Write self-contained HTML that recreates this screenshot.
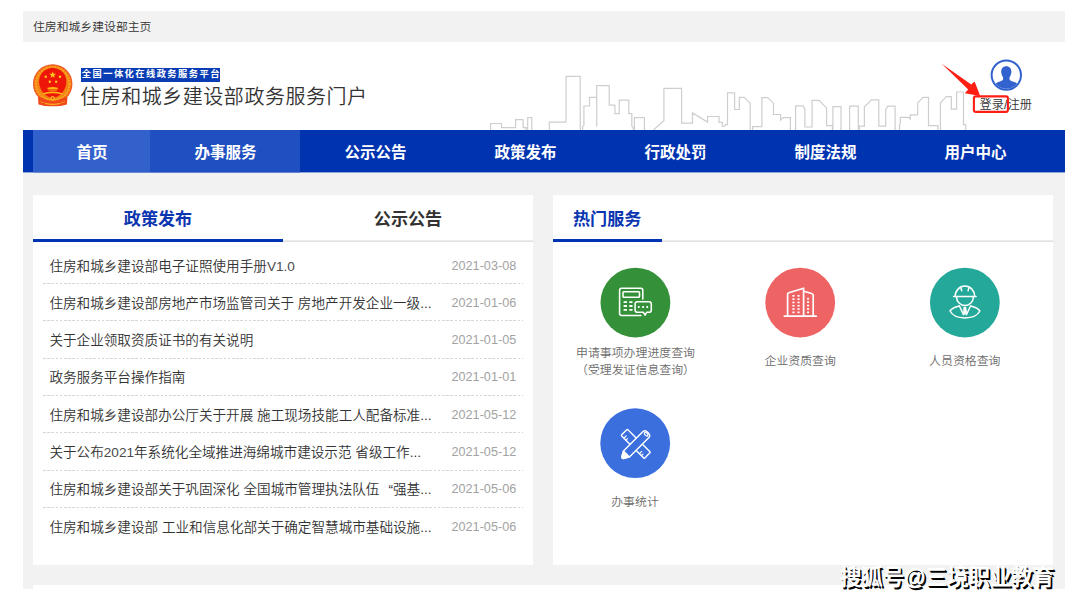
<!DOCTYPE html>
<html lang="zh-CN">
<head>
<meta charset="utf-8">
<title>住房和城乡建设部政务服务门户</title>
<style>
*{margin:0;padding:0;box-sizing:border-box;}
html,body{width:1080px;height:602px;background:#fff;overflow:hidden;}
body{position:relative;font-family:"Liberation Sans","Noto Sans CJK SC",sans-serif;color:#333;font-weight:350;}
.abs{position:absolute;}
#shot{position:absolute;left:23px;top:11px;width:1042px;height:578px;background:#f2f2f2;overflow:hidden;}
/* coordinates inside #shot are page coords minus (23,11) */
#topbar{left:0;top:0;width:1042px;height:31px;background:#f2f2f2;}
#topbar span{position:absolute;left:10px;top:0.6px;line-height:31px;font-size:11.85px;color:#333;white-space:nowrap;}
#head{left:0;top:31px;width:1042px;height:88px;background:#fff;}
#nav{left:0;top:119px;width:1042px;height:42px;background:#0033b0;box-shadow:0 1px 0 rgba(0,51,176,0.4);}
#nav a{position:absolute;top:0;height:42px;line-height:45px;padding-left:1px;text-align:center;color:#fff;font-weight:bold;font-size:15.5px;white-space:nowrap;text-decoration:none;}
.panel{background:#fff;}
.tabt{position:absolute;font-weight:bold;font-size:17.1px;line-height:24px;white-space:nowrap;}
.row{position:absolute;left:10px;width:480px;height:37px;}
.ln{position:absolute;left:10px;width:480px;height:1px;background-image:repeating-linear-gradient(to right,#d6d6d6 0,#d6d6d6 2.6px,transparent 2.6px,transparent 4.2px);}
.row .t{position:absolute;left:6.4px;top:0;line-height:37px;font-size:13.6px;color:#333;white-space:nowrap;}
.row .en{color:#4a4a4a;}
.row .q{display:inline-block;width:13.6px;text-align:right;}
.row .d{position:absolute;right:6.8px;top:0;line-height:37px;font-size:12.65px;color:#a2a2a2;white-space:nowrap;}
.circ{position:absolute;width:72px;height:72px;}
.circ svg{display:block;}
.lab{font-weight:350;position:absolute;width:164px;text-align:center;font-size:11.9px;line-height:16.7px;color:#6c6c6c;white-space:nowrap;}
</style>
</head>
<body>
<div id="shot">
  <div id="topbar" class="abs"><span>住房和城乡建设部主页</span></div>
  <div id="head" class="abs">
    <svg class="abs" id="emb" style="left:9px;top:21px;" width="42" height="45" viewBox="32 63 42 45">
<defs>
<radialGradient id="eg" cx="50%" cy="50%" r="50%"><stop offset="0.6" stop-color="#f0780e"/><stop offset="0.84" stop-color="#f58c1a"/><stop offset="0.95" stop-color="#f0661c"/><stop offset="1" stop-color="#ee4620"/></radialGradient>
</defs>
<circle cx="52.7" cy="83.9" r="19.7" fill="url(#eg)"/>
<circle cx="52.7" cy="83.9" r="16.9" fill="none" stroke="#fcb424" stroke-width="2.4" stroke-dasharray="1.5 1.4" opacity="0.7"/>
<path d="M38,97.2 Q39.6,96 41.4,97.4 Q47,100.6 52.7,100.4 Q58.4,100.6 64,97.4 Q65.8,96 67.4,97.2 L66.9,104.4 Q60,106.5 52.7,106.3 Q45.4,106.5 38.5,104.4 Z" fill="#f0481a"/>
<path d="M52.7,67.8 C61.4,68.4 66.3,74.4 66.3,81.8 C66.3,89.4 61,96.6 52.7,98.2 C44.4,96.6 39.1,89.4 39.1,81.8 C39.1,74.4 44,68.4 52.7,67.8 Z" fill="#ee1608"/>
<g fill="#ffc81c">
<path d="M52.7,71.4 l0.85,2.35 l2.5,0.1 l-1.96,1.55 l0.68,2.4 l-2.07,-1.38 l-2.07,1.38 l0.68,-2.4 l-1.96,-1.55 l2.5,-0.1 z"/>
<circle cx="45.7" cy="76.7" r="1.2"/><circle cx="60" cy="76.7" r="1.2"/>
<circle cx="49.8" cy="81.8" r="1.2"/><circle cx="56.2" cy="81.8" r="1.2"/>
</g>
<path d="M47.5,89.2 h10.4 v-1.5 q-5.2,-1.3 -10.4,0 z" fill="#fdb616"/>
<path d="M48.4,89.2 h8.6 v1.9 h-8.6 z" fill="#f4700f"/>
<path d="M42.2,93.4 Q52.7,89.8 63.2,93.4 L62,94.4 Q52.7,92.2 43.4,94.4 Z" fill="#fdb616"/>
<path d="M43.4,97 Q52.7,103.2 62,97" fill="none" stroke="#f8a21c" stroke-width="1.4"/>
<circle cx="52.7" cy="98.2" r="2.3" fill="#fbb01c"/>
<circle cx="52.7" cy="98.2" r="0.9" fill="#ee3a12"/>
<path d="M45,103.4 Q52.7,105.6 60.4,103.4" fill="none" stroke="#f9a81e" stroke-width="1.3"/>
<path d="M40.4,101.4 Q42,103 44.2,102.6 M65,101.4 Q63.4,103 61.2,102.6" fill="none" stroke="#f68a1c" stroke-width="1.2"/>
</svg>
    <div class="abs" id="plat" style="left:58px;top:26px;height:13.5px;width:139px;background:#0a3cb4;color:#fff;font-weight:bold;font-size:9.3px;line-height:13.5px;letter-spacing:1.4px;white-space:nowrap;padding-left:0.8px;">全国一体化在线政务服务平台</div>
    <div class="abs" id="title" style="left:57.3px;top:40px;font-size:20px;line-height:30px;letter-spacing:0.51px;color:#333;white-space:nowrap;">住房和城乡建设部政务服务门户</div>
    <svg class="abs" id="sky" style="left:0;top:0;" width="1042" height="88" viewBox="23 42 1042 88" fill="none" stroke="#cecece" stroke-width="1.2" stroke-linejoin="miter">
<path d="M490.6,130 V123.5 H501.5 V127.6 H515.6 V119.6 H523.1 V127.6 H526.2 V130 M527.7,130 V117.7 H531.8 V130"/>
<path d="M549.3,130 V122.1 H566 V76.3 H580.2 V130"/>
<path d="M582.6,130 V126.8 L583.9,125.3 V106 H589.5 V97.3 H596.7 M596.7,126.5 V85.6 H609.2 V105.2 H614.9 V113.7 H619.3 V100.1 H628.8 V113.7 H631.8 V126.2 L633.3,127.3 V130"/>
<path d="M634.4,130 V117.7 H644.4 V130"/>
<path d="M653.5,130 L663.9,120.7 V88.4 H681.6 V123.2 H692.5 V112.9 L707.6,122.1 V116.5 H719 V122.3 H722.3 V126.2 H724.6 L725.7,124.6 H727.5 V92.8 H734.6 V109.5 H739.4 V97.3 H744.4 L750.2,103.4 V130"/>
<path d="M752.6,130 V126.6 H761.9 V97.6 H767.8 L773.5,103.4 V114.5 H780.6 V120.1 L783,117.7 H790.4 V130"/>
<path d="M795.6,130 V105.9 H803.2 L804.9,109.5 V127 H812.1 V100.3 H819 L826.6,107.9 V125.7 H832.4 V130"/>
<path d="M832.9,130 V106.7 H841 V130"/>
<path d="M849.6,130 V106.2 H858.3 V130"/>
<path d="M859.3,130 V126.2 H864.4 V107.1 L871.4,99.8 H878.8 V126.2 H885.7 V109.5 L887.9,106.2 H895.1 V130"/>
<path d="M899.5,130 V124.6 L900.3,123.5 V117.3 H908.4 L910.3,119 V114.9 H917.7 V102.9 L922.9,97.3 H928.5 V125.7 H937.9 V130"/>
<path d="M940.4,130 V102.9 L946.3,96.7 H951.3 V109.2 H956.6 V92 H963.5 V124.6 H965.8 V130"/>
</svg>
    <svg class="abs" id="user" style="left:966px;top:16px;" width="34" height="34" viewBox="-0.3 -0.1 34 34">
<defs><clipPath id="uc"><circle cx="17" cy="17" r="13.6"/></clipPath></defs>
<circle cx="17" cy="17" r="14.7" fill="#fff" stroke="#3262cd" stroke-width="2"/>
<g clip-path="url(#uc)" fill="#3262cd">
<path d="M17,8.2 c3.1,0 5.1,2.2 5.1,5.3 c0,1.2 -0.2,2.3 -0.7,3.3 c-0.2,0.9 -0.6,1.7 -1.2,2.3 v2.2 c0.6,1.3 2.6,1.9 4.8,2.7 c2.2,0.8 3.4,1.8 3.8,3.2 V34 H5.2 v-6.8 c0.4,-1.4 1.6,-2.4 3.8,-3.2 c2.2,-0.8 4.2,-1.4 4.8,-2.7 v-2.2 c-0.6,-0.6 -1,-1.4 -1.2,-2.3 c-0.5,-1 -0.7,-2.1 -0.7,-3.3 c0,-3.1 2,-5.3 5.1,-5.3 z"/>
</g></svg>
    <div class="abs" id="login" style="left:956.4px;top:53px;font-size:12.2px;letter-spacing:0.1px;line-height:20px;color:#333;white-space:nowrap;">登录/注册</div>
    <svg class="abs" id="arrow" style="left:0;top:0;" width="1042" height="88" viewBox="23 42 1042 88">
<path d="M941.7,63.7 L971.2,84.6 L974.6,81.6 L980.2,96 L964.8,93.3 L968.2,89.4 Z" fill="#ff1e14"/>
<rect x="973.9" y="96.4" width="34" height="15.5" rx="2" ry="2" fill="none" stroke="#ff1e14" stroke-width="2.1"/>
</svg>
  </div>
  <div id="nav" class="abs">
    <a style="left:10px;width:117px;background:#3361cc;box-shadow:0 1px 0 rgba(51,97,204,0.4);">首页</a>
    <a style="left:127px;width:150px;background:#1f4fc0;box-shadow:0 1px 0 rgba(31,79,192,0.4);">办事服务</a>
    <a style="left:277px;width:150px;">公示公告</a>
    <a style="left:427px;width:150px;">政策发布</a>
    <a style="left:577px;width:150px;">行政处罚</a>
    <a style="left:727px;width:150px;">制度法规</a>
    <a style="left:877px;width:150px;">用户中心</a>
  </div>

  <div class="abs panel" id="pl" style="left:10px;top:184px;width:500px;height:370px;">
    <div class="abs" style="left:0;top:45px;width:500px;height:2px;background:linear-gradient(to bottom,#ececec 0,#ececec 1px,#e0e0e0 1px,#e0e0e0 2px);"></div>
    <div class="abs" style="left:0;top:44px;width:250px;height:3px;background:#0033b3;"></div>
    <div class="tabt" style="left:0;width:250px;text-align:center;top:12.5px;color:#0a35b0;">政策发布</div>
    <div class="tabt" style="left:250px;width:250px;text-align:center;top:12.5px;color:#333;">公示公告</div>
    <div class="row" style="top:52px;transform:translateY(0.5px);"><span class="t">住房和城乡建设部电子证照使用手册<span class="en">V1.0</span></span><span class="d">2021-03-08</span></div>
    <div class="row" style="top:89px;transform:translateY(0.5px);"><span class="t">住房和城乡建设部房地产市场监管司关于 房地产开发企业一级...</span><span class="d">2021-01-06</span></div>
    <div class="row" style="top:126px;transform:translateY(1px);"><span class="t">关于企业领取资质证书的有关说明</span><span class="d">2021-01-05</span></div>
    <div class="row" style="top:164px;transform:translateY(0.3px);"><span class="t">政务服务平台操作指南</span><span class="d">2021-01-01</span></div>
    <div class="row" style="top:201px;transform:translateY(0.5px);"><span class="t">住房和城乡建设部办公厅关于开展 施工现场技能工人配备标准...</span><span class="d">2021-05-12</span></div>
    <div class="row" style="top:238px;transform:translateY(1px);"><span class="t">关于公布<span class="en">2021</span>年系统化全域推进海绵城市建设示范 省级工作...</span><span class="d">2021-05-12</span></div>
    <div class="row" style="top:276px;transform:translateY(0.4px);"><span class="t">住房和城乡建设部关于巩固深化 全国城市管理执法队伍<span class="q">“</span>强基...</span><span class="d">2021-05-06</span></div>
    <div class="row" style="top:313px;transform:translateY(0.7px);"><span class="t">住房和城乡建设部 工业和信息化部关于确定智慧城市基础设施...</span><span class="d">2021-05-06</span></div>
    <i class="ln" style="top:88px;"></i>
    <i class="ln" style="top:125px;"></i>
    <i class="ln" style="top:163px;"></i>
    <i class="ln" style="top:200px;"></i>
    <i class="ln" style="top:237px;"></i>
    <i class="ln" style="top:275px;"></i>
    <i class="ln" style="top:312px;"></i>
  </div>

  <div class="abs panel" id="pr" style="left:530px;top:184px;width:500px;height:370px;">
    <div class="abs" style="left:0;top:45px;width:500px;height:2px;background:linear-gradient(to bottom,#ececec 0,#ececec 1px,#e0e0e0 1px,#e0e0e0 2px);"></div>
    <div class="abs" style="left:0;top:44px;width:109px;height:3px;background:#0033b3;"></div>
    <div class="tabt" style="left:20px;top:12.5px;color:#0a35b0;">热门服务</div>
    <div class="circ" style="left:47px;top:72px;"><svg width="72" height="72" viewBox="0 0 72 72"><g transform="translate(0.4,0.6)"><circle cx="35" cy="35" r="34.9" fill="#349039"/><g fill="none" stroke="#fff" stroke-width="1.55" stroke-linecap="round" stroke-linejoin="round">
<path d="M42.4,31.5 V22.6 a2,2 0 0 0 -2,-2 H21.2 a2,2 0 0 0 -2,2 V45.9 a2,2 0 0 0 2,2 H40.5"/>
<rect x="22.6" y="24.1" width="16.5" height="5.5" rx="0.8"/>
<path d="M23.2,34.6 h3.4 M28.9,34.6 h3.2 M23.2,38.4 h3.4 M28.9,38.4 h3.2 M23.2,42.3 h3.4 M28.9,42.3 h3.2" stroke-width="1.8" stroke-linecap="butt"/>
<path d="M37,34.2 h11.6 a2.3,2.3 0 0 1 2.3,2.3 v5.8 a2.3,2.3 0 0 1 -2.3,2.3 h-2.2 l-1.7,2.9 l-1.9,-2.9 h-5.8 a2.3,2.3 0 0 1 -2.3,-2.3 v-5.8 a2.3,2.3 0 0 1 2.3,-2.3 z"/>
<path d="M37.5,39.4 h1.7 M41.8,39.4 h1.7 M46,39.4 h1.7" stroke-width="1.8" stroke-linecap="butt"/>
</g></g></svg></div>
    <div class="circ" style="left:212px;top:72px;"><svg width="72" height="72" viewBox="0 0 72 72"><g transform="translate(0.2,0.6)"><circle cx="35" cy="35" r="34.9" fill="#ee6363"/><g fill="none" stroke="#fff" stroke-width="1.7" stroke-linejoin="round" stroke-linecap="round">
<path d="M19.2,48.6 H51" stroke-width="1.8"/>
<path d="M22.4,48.4 V26.6 a1.6,1.6 0 0 1 1.2,-1.5 L38.4,20.6 V48.4"/>
<path d="M38.6,23.7 L46.4,25.9 a2.2,2.2 0 0 1 1.6,2.1 V48.4"/>
<g stroke="none" fill="#fff">
<rect x="27.2" y="27.4" width="2.1" height="1.7"/><rect x="32.3" y="27.4" width="2.1" height="1.7"/>
<rect x="27.2" y="30.7" width="2.1" height="1.7"/><rect x="32.3" y="30.7" width="2.1" height="1.7"/>
<rect x="27.2" y="34.0" width="2.1" height="1.7"/><rect x="32.3" y="34.0" width="2.1" height="1.7"/>
<rect x="27.2" y="37.3" width="2.1" height="1.7"/><rect x="32.3" y="37.3" width="2.1" height="1.7"/>
<rect x="27.2" y="40.6" width="2.1" height="1.7"/><rect x="32.3" y="40.6" width="2.1" height="1.7"/>
<rect x="27.2" y="43.9" width="2.1" height="1.7"/><rect x="32.3" y="43.9" width="2.1" height="1.7"/>
<rect x="41.8" y="30.3" width="2.1" height="1.7"/>
<rect x="41.8" y="33.7" width="2.1" height="1.7"/>
<rect x="41.8" y="37.1" width="2.1" height="1.7"/>
<rect x="41.8" y="40.5" width="2.1" height="1.7"/>
<rect x="41.8" y="43.9" width="2.1" height="1.7"/>
</g></g></g></svg></div>
    <div class="circ" style="left:376px;top:72px;"><svg width="72" height="72" viewBox="0 0 72 72"><g transform="translate(0.85,0.6)"><circle cx="35" cy="35" r="34.9" fill="#24a899"/><g fill="none" stroke="#fff" stroke-width="1.5" stroke-linejoin="round" stroke-linecap="round">
<path d="M25.3,28.8 a9.8,10.3 0 0 1 19.6,0"/>
<path d="M23.8,28.9 H46.3" stroke-width="1.5"/>
<path d="M31,20.2 l0.9,3 M39.1,20.2 l-0.9,3"/>
<path d="M26.7,29.4 a8.4,8.4 0 0 0 16.8,0"/>
<path d="M29.4,38.3 C25.2,39.4 21.6,41 20.2,43.4 C22.4,47.6 28,50.3 35.1,50.3 C42.2,50.3 47.8,47.6 50,43.4 C48.6,41 45,39.4 40.8,38.3"/>
<path d="M29.6,38.4 L33.6,47.2 M40.6,38.4 L36.6,47.2"/>
<path d="M34.2,39.4 h1.8 l0.9,5.4 l-1.8,2.4 l-1.8,-2.4 z" fill="#fff" stroke-width="0.6"/>
</g></g></svg></div>
    <div class="circ" style="left:47px;top:213px;"><svg width="72" height="72" viewBox="0 0 72 72"><g transform="translate(0.2,0.2)"><circle cx="35" cy="35" r="34.9" fill="#3a6fdd"/><g fill="none" stroke="#fff" stroke-width="1.4" stroke-linejoin="round" stroke-linecap="round">
<g transform="translate(35.6,35.6) rotate(45)">
<rect x="-16.4" y="-4.4" width="32.8" height="8.8" rx="0.8"/>
<path d="M-12.4,4.4 v-3.2 M-9.6,4.4 v-2.2 M9.6,4.4 v-3.2 M12.4,4.4 v-2.2" stroke-width="1.2"/>
</g>
<g transform="translate(35.6,36.4) rotate(-45)">
<path d="M-13.2,-4.2 H14.4 a2.8,4.2 0 0 1 0,8.4 H-13.2 L-18.6,1.2 Q-19.6,0 -18.6,-1.2 z" fill="#3a6fdd"/>
<path d="M-13.2,-4.2 L-18.6,-1.2 Q-19.6,0 -18.6,1.2 L-13.2,4.2 z" fill="#fff"/>
<ellipse cx="14.6" cy="0" rx="1.3" ry="2.1" stroke-width="1.2"/>
</g>
</g></g></svg></div>
    <div class="lab" style="left:0.5px;top:150.4px;">申请事项办理进度查询<br>（受理发证信息查询）</div>
    <div class="lab" style="left:165.2px;top:158.2px;">企业资质查询</div>
    <div class="lab" style="left:329.8px;top:158.2px;">人员资格查询</div>
    <div class="lab" style="left:0px;top:299.4px;">办事统计</div>
  </div>

  <div class="abs panel" id="pb" style="left:10px;top:574px;width:1020px;height:10px;"></div>
</div>
<div class="abs" id="wm" style="left:840.4px;top:562.6px;font-size:21.4px;line-height:30px;font-weight:400;color:#fff;white-space:nowrap;text-shadow:-1px -1px 0 #fff,1px 1px 0 #000,1.7px 1.7px 0 #000;">搜狐号@三境职业教育</div>
</body>
</html>
